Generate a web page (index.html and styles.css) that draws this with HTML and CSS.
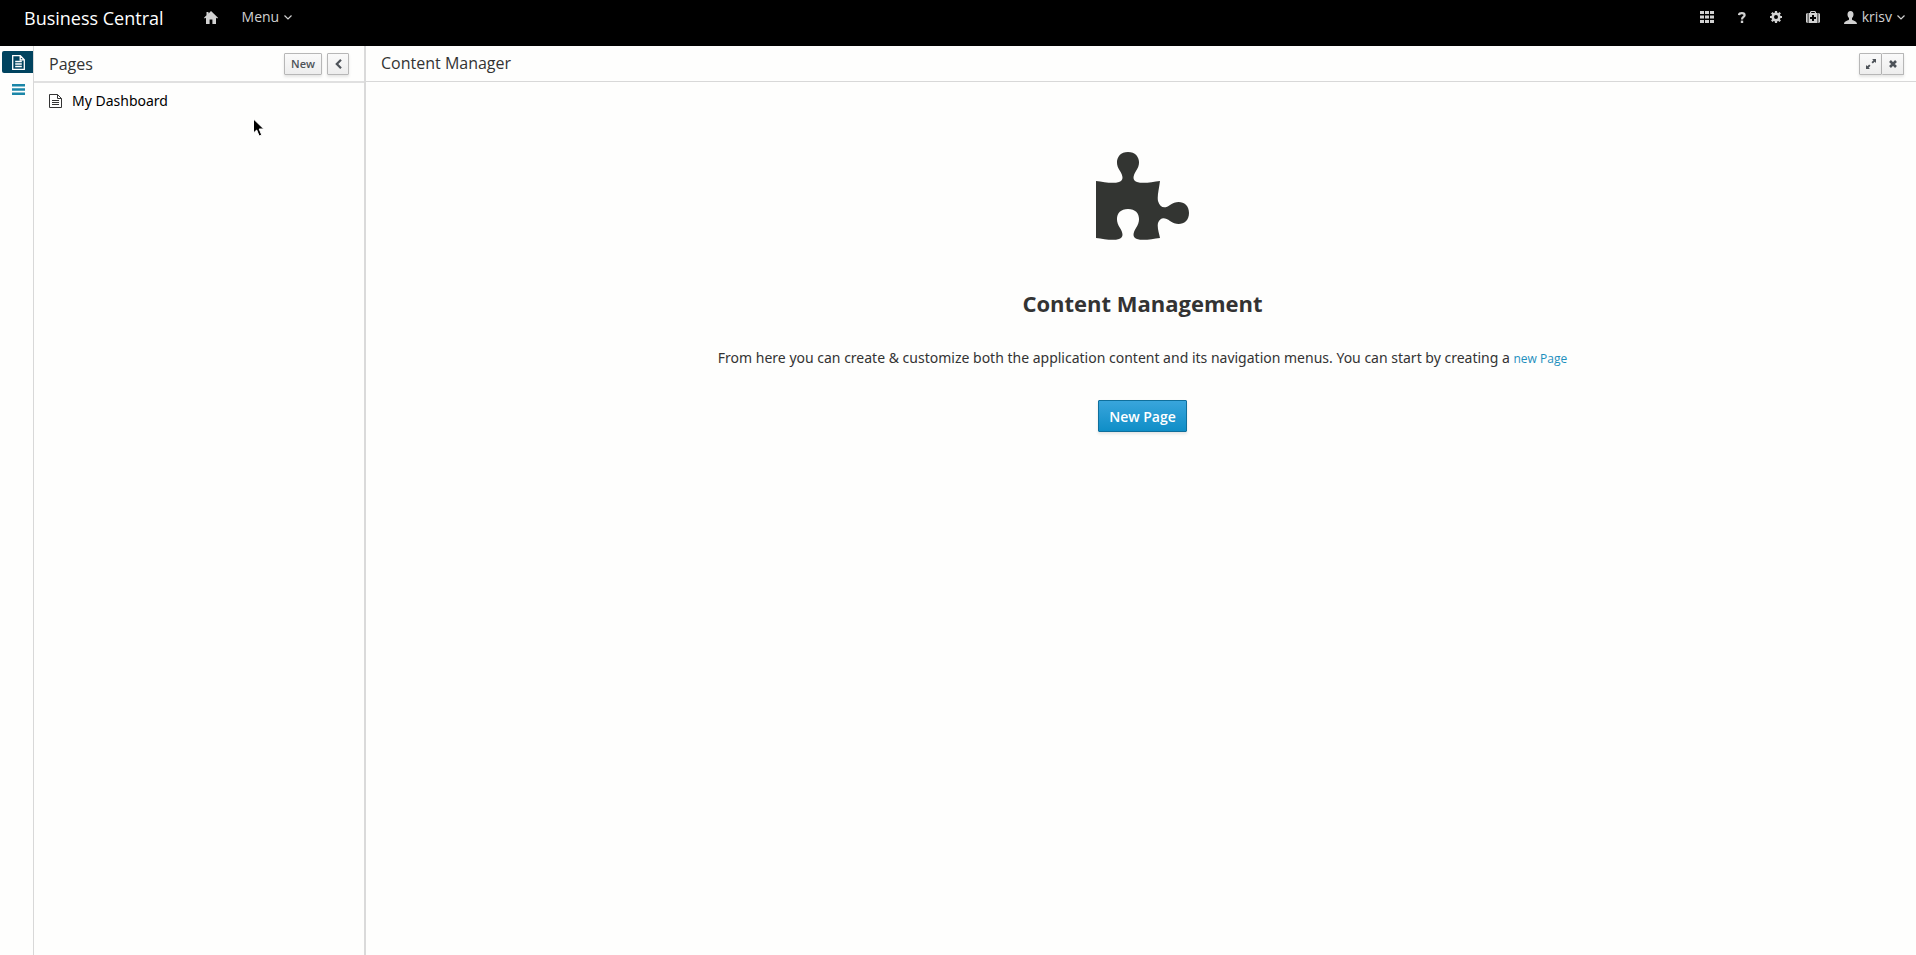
FILE: index.html
```html
<!DOCTYPE html>
<html lang="en">
<head>
<meta charset="utf-8">
<title>Business Central</title>
<link rel="stylesheet" href="styles.css">
</head>
<body>
<header class="masthead">
  <a class="brand" href="#">Business Central</a>
  <nav class="primary">
    <a class="nav-item home" href="#" aria-label="Home"><svg width="14" height="13" viewBox="0 0 14 13"><path fill="currentColor" d="M7 0 14 6.7l-.8.8-1.2-.7V13H8.400V8.600H5.600V13H2V6.800l-1.200.7L0 6.700 2.500 4.300V1h2v1.400z"/></svg></a>
    <button class="nav-item" type="button">Menu <svg width="8" height="5" viewBox="0 0 8 5"><path fill="none" stroke="currentColor" stroke-width="1.200" d="M.5.5 4 4 7.500.5"/></svg></button>
  </nav>
  <nav class="utility">
    <button class="nav-item" type="button" aria-label="Applications"><svg width="14" height="12" viewBox="0 0 14 12"><path fill="currentColor" d="M0 0h4v3H0zM5 0h4v3H5zM10 0h4v3h-4zM0 4.500h4v3H0zM5 4.500h4v3H5zM10 4.500h4v3h-4zM0 9h4v3H0zM5 9h4v3H5zM10 9h4v3h-4z"/></svg></button>
    <button class="nav-item" type="button" aria-label="Help"><svg width="8" height="11" viewBox="0 0 8 11"><path fill="none" stroke="currentColor" stroke-width="2.200" d="M1 3C1.300.5 6.600.4 6.600 3.200 6.600 5 4 4.800 4 7.400"/><path fill="currentColor" d="M2.800 8.600h2.400V11H2.800z"/></svg></button>
    <button class="nav-item" type="button" aria-label="Settings"><svg width="12" height="12" viewBox="0 0 12 12"><circle cx="6" cy="6" r="3.300" fill="none" stroke="currentColor" stroke-width="2.600"/><path stroke="currentColor" stroke-width="2.200" d="M6 0v2.500M6 9.500V12M0 6h2.500M9.500 6H12M1.800 1.800l1.600 1.600M8.600 8.600l1.600 1.600M10.200 1.800 8.600 3.400M3.400 8.600l-1.600 1.600"/></svg></button>
    <button class="nav-item" type="button" aria-label="Administration"><svg width="14" height="12" viewBox="0 0 14 12"><path fill="currentColor" fill-rule="evenodd" d="M4 2V1l1-1h4l1 1v1h1.500v10h-9V2zm1.200 0h3.600V1H5.200zM6 4v2H4v2h2v2h2V8h2V6H8V4zM1.700 2v10H1L0 11V3l1-1zM12.300 2v10h.7l1-1V3l-1-1z"/></svg></button>
    <button class="nav-item" type="button"><svg width="13" height="13" viewBox="0 0 13 13"><path fill="currentColor" d="M6.500 0C8.500 0 9.500 1.300 9.500 3.400 9.500 5.200 8.600 6.400 8 7v1.400c.3 1.300 5 1 5 4.600H0c0-3.600 4.700-3.300 5-4.600V7c-.6-.6-1.500-1.800-1.500-3.600C3.500 1.300 4.500 0 6.500 0z"/></svg> krisv <svg width="8" height="5" viewBox="0 0 8 5"><path fill="none" stroke="currentColor" stroke-width="1.200" d="M.5.5 4 4 7.500.5"/></svg></button>
  </nav>
</header>
<div class="workspace">
  <nav class="rail" aria-label="Explorer">
    <button class="rail-item active" type="button" aria-label="Pages"><svg width="13" height="15" viewBox="0 0 13 15"><path fill="none" stroke="currentColor" stroke-width="1.300" d="M.7.7h7.600l4 4v9.600H.7zM8.200.7v4.200h4.200M3.200 6.500h6.600M3.200 9h6.600M3.200 11.500h6.600"/></svg></button>
    <button class="rail-item" type="button" aria-label="Navigation"><svg width="13" height="11" viewBox="0 0 13 11"><path fill="currentColor" d="M0 0h13v2.400H0zM0 4.300h13v2.400H0zM0 8.600h13V11H0z"/></svg></button>
  </nav>
  <aside class="explorer">
    <div class="panel-head explorer-head">
      <h2 class="panel-title">Pages</h2>
      <button class="btn" type="button">New</button>
      <button class="btn icon-btn" type="button" aria-label="Collapse"><svg width="7" height="10" viewBox="0 0 7 10"><path fill="none" stroke="currentColor" stroke-width="2.200" d="M6 .8 1.800 5 6 9.200"/></svg></button>
    </div>
    <ul class="page-list">
      <li><a class="page-link" href="#"><svg width="13" height="14" viewBox="0 0 13 14"><path fill="none" stroke="#333" d="M.5.500h8l4 4v9H.5zM8.500.5v4h4M3 6.500h7M3 8.500h7M3 10.500h7"/></svg>My Dashboard</a></li>
    </ul>
  </aside>
  <main class="content">
    <div class="panel-head content-head">
      <h2 class="panel-title">Content Manager</h2>
      <div class="btn-group">
        <button class="btn icon-btn" type="button" aria-label="Maximize"><svg width="10" height="10" viewBox="0 0 10 10"><path fill="currentColor" d="M6 0h4v4L8.700 2.700 6.800 4.500 5.500 3.200l1.900-1.900zM4 10H0V6l1.300 1.300L3.200 5.500 4.500 6.800 2.600 8.700z"/></svg></button>
        <button class="btn icon-btn" type="button" aria-label="Close"><svg width="8" height="8" viewBox="0 0 8 8"><path stroke="currentColor" stroke-width="2.600" d="m1 1 6 6M7 1 1 7"/></svg></button>
      </div>
    </div>
    <section class="blank-state">
      <svg class="puzzle" width="93" height="88" viewBox="0 0 93 88"><path fill="currentColor" d="M0 29C8 30 17 32 23 30C28 28 27 24 24 19C18 11 21 0 32 0C43 0 46 11 40 19C37 24 36 28 41 30C47 32 56 30 64 29C63 37 61 44 62 49C64 56 69 57 74 53C82 47 93 50 93 61C93 72 82 75 74 69C69 65 64 65 62 71C61 76 63 81 64 86C56 87 47 89 41 87C36 85 37 81 40 76C46 67 43 57 32 57C21 57 18 67 24 76C27 81 28 85 23 87C17 89 8 87 0 86Z"/></svg>
      <h1 class="blank-title">Content Management</h1>
      <p class="blank-text">From here you can create &amp; customize both the application content and its navigation menus. You can start by creating a <a class="text-link" href="#">new Page</a></p>
      <button class="btn-primary" type="button">New Page</button>
    </section>
  </main>
</div>
<svg class="pointer" width="12" height="20" viewBox="0 0 12 20" aria-hidden="true"><path fill="#000" stroke="#fff" d="M.5 1v14l3.200-3 2.400 6 2.600-1.100L6.200 11h4.600z"/></svg>
</body>
</html>
```
FILE: styles.css
```css
* { box-sizing: border-box; }

body {
  margin: 0;
  min-height: 100vh;
  display: flex;
  flex-direction: column;
  background: #fefefd;
  color: #333;
  font: 14px/20px "Open Sans", sans-serif;
}

svg { display: block; flex: none; }
button { font-family: inherit; cursor: pointer; }
h1, h2, p, ul { margin: 0; padding: 0; }

.masthead {
  display: flex;
  align-items: flex-start;
  height: 46px;
  padding: 7px 11px 0 24px;
  background: #000;
}
.brand {
  color: #fff;
  font-size: 18px;
  line-height: 22px;
  text-decoration: none;
}
.primary, .utility { display: flex; }
.primary { gap: 24px; margin-left: 40px; }
.utility { gap: 24px; margin-left: auto; }
.nav-item {
  display: flex;
  align-items: center;
  gap: 5px;
  height: 20px;
  padding: 0;
  border: 0;
  background: none;
  color: #d1d1d1;
  font-size: 14px;
  line-height: 20px;
}

.workspace { flex: 1; display: flex; }
.rail {
  width: 34px;
  padding: 5px 0 0 2px;
  border-right: 1px solid #d8d8d8;
}
.rail-item {
  display: flex;
  align-items: center;
  justify-content: flex-end;
  width: 100%;
  height: 22px;
  margin-bottom: 5px;
  padding: 0 8px 0 0;
  border: 0;
  background: none;
  color: #1b86a8;
}
.rail-item.active {
  border-radius: 2px 0 0 2px;
  background: #00435f;
  color: #fff;
}

.explorer { width: 332px; border-right: 2px solid #dadada; }
.panel-head {
  display: flex;
  align-items: center;
  height: 36px;
  border-bottom: 1px solid #d8d8d8;
}
.explorer-head {
  gap: 5px;
  height: 37px;
  padding: 0 15px;
  border-bottom: 2px solid #e0e0e0;
}
.panel-title {
  flex: 1;
  font-size: 16px;
  font-weight: 400;
  line-height: 20px;
}
.content-head { padding: 0 12px 0 15px; }
.content-head .panel-title { padding-bottom: 2px; }
.btn {
  height: 22px;
  padding: 0 6px;
  border: 1px solid #b7b7b7;
  border-radius: 1px;
  background: linear-gradient(#fafafa, #ededed);
  box-shadow: 0 2px 3px rgba(3, 3, 3, 0.1);
  color: #4d5258;
  font-size: 11px;
  font-weight: 600;
  line-height: 16px;
}
.icon-btn {
  display: flex;
  align-items: center;
  justify-content: center;
  width: 22px;
  padding: 0;
}
.btn-group { display: flex; }
.btn-group .btn { width: 23px; }
.btn-group .btn + .btn { width: 22px; border-left: 0; }

.page-list { padding: 8px 15px; list-style: none; }
.page-link {
  display: flex;
  align-items: center;
  gap: 10px;
  color: #000;
  font-family: "Noto Sans", "Open Sans", sans-serif;
  text-decoration: none;
}

.content { flex: 1; }
.blank-state {
  display: flex;
  flex-direction: column;
  align-items: center;
  padding: 70px 20px 40px 23px;
  text-align: center;
}
.puzzle { color: #333532; }
.blank-title {
  margin-top: 49px;
  font-size: 22px;
  font-weight: 700;
  line-height: 28px;
}
.blank-text {
  margin-top: 31px;
  font-family: "Noto Sans", "Open Sans", sans-serif;
}
.text-link {
  color: #1d8fbd;
  font-family: "Open Sans", sans-serif;
  font-size: 12px;
  text-decoration: none;
}
.btn-primary {
  height: 32px;
  margin-top: 31px;
  padding: 0 10px;
  border: 1px solid #0f6f9c;
  border-radius: 1px;
  background: linear-gradient(#39a5dc, #0f8ec7);
  box-shadow: 0 2px 3px rgba(3, 3, 3, 0.1);
  color: #fff;
  font-size: 14px;
  font-weight: 600;
}

.pointer { position: absolute; left: 253px; top: 118px; }
```
